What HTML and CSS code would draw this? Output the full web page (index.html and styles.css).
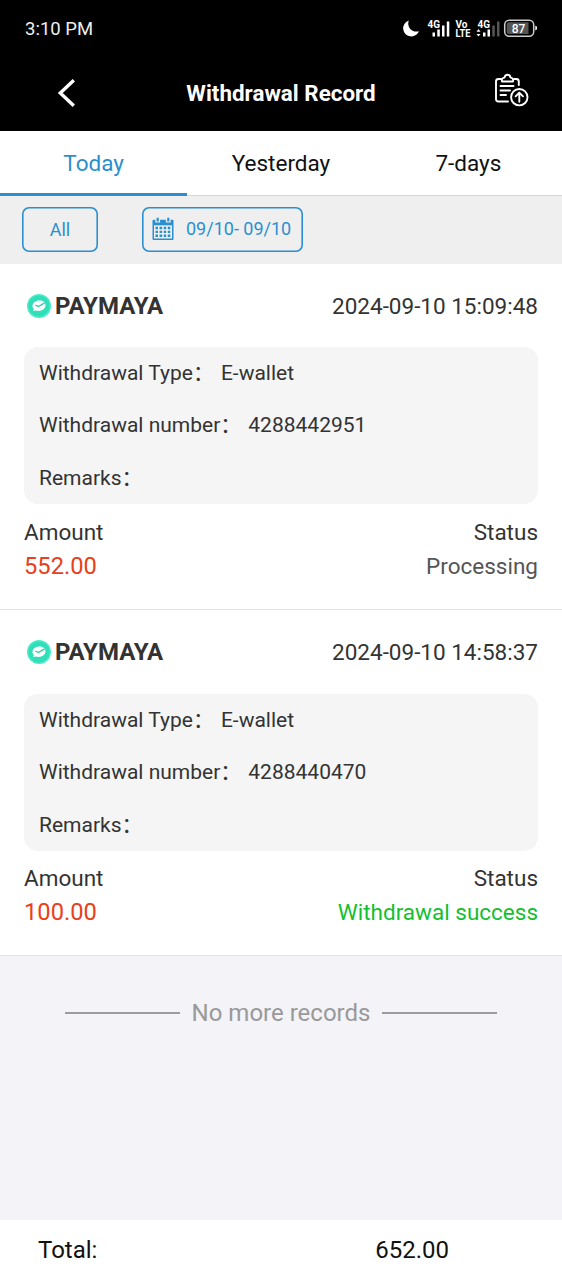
FILE: index.html
```html
<!DOCTYPE html>
<html lang="en">
<head>
<meta charset="utf-8">
<title>Withdrawal Record</title>
<link rel="stylesheet" href="styles.css">
</head>
<body>
<svg class="defs" width="0" height="0">
  <symbol id="maya" viewBox="0 0 26 26">
    <circle cx="13" cy="13" r="12" fill="#4becc5"/>
    <circle cx="13" cy="13" r="10.500" fill="#30dfba"/>
    <path d="M13.300 7.500c3.800 0 6.200 1.900 6.200 4.700 0 3.400-3.200 5.700-7 5.700-1 0-1.800-.2-2.500-.5l-3 .6.900-1.900c-1-.9-1.400-1.800-1.400-3 0-3.300 3.100-5.600 6.800-5.600z" fill="#fff"/>
    <path d="M9.800 12.200l2.600 1.400 5.800-3.500" fill="none" stroke="#2bc9a8" stroke-width="1.300" stroke-linecap="round"/>
  </symbol>
</svg>
<div class="screen">
  <div class="statusbar">
    <span class="clock">3:10 PM</span>
    <svg class="indicators" width="140" height="24" viewBox="0 0 140 24" fill="#fff">
      <path d="M8.800 3.500C6.500 9.500 11.500 16 19 14.300A8.200 8.200 0 1 1 8.800 3.500z"/>
      <text x="27.500" y="11" class="net">4G</text>
      <path d="M32.500 15.500h2.500v4h-2.500zM37.300 12.500h2.500v7h-2.500zM42 8.500h2.500v11h-2.500zM46.800 4.500h2.500v15h-2.500z"/>
      <text x="55.500" y="10.500" class="volte">Vo</text>
      <text x="55.500" y="20" class="volte" textLength="15" lengthAdjust="spacingAndGlyphs">LTE</text>
      <text x="77.500" y="11" class="net">4G</text>
      <path d="M76.500 14.700l2-2.600 2 2.600zM76.500 16.900l2 2.600 2-2.600zM83 15.500h2.500v4h-2.500zM87.500 12.500h2.500v7h-2.500z"/>
      <path d="M92.300 8.500h2.500v11h-2.500zM97 4.500h2.500v15h-2.500z" fill="#555"/>
      <rect x="104.700" y="3.200" width="29" height="16" rx="4.500" fill="none" stroke="#ccc" stroke-width="1.500"/>
      <path d="M109 5.300h19.500v11.800H109q-2.300 0-2.300-2.300V7.600q0-2.300 2.300-2.300z" fill="#555"/>
      <path d="M135.300 8.800q1.800 0 1.800 2.300t-1.800 2.300z"/>
      <text x="118.500" y="15.500" class="charge">87</text>
    </svg>
  </div>
  <header class="header">
    <svg class="back" width="22" height="34" viewBox="0 0 22 34"><path d="M18.800 4.300L5.300 17l13.500 12.700" fill="none" stroke="#fff" stroke-width="3.400"/></svg>
    <h1 class="title">Withdrawal Record</h1>
    <svg class="report" width="36" height="36" viewBox="0 0 36 36" fill="none" stroke="#fff" stroke-width="1.900" stroke-linecap="round" stroke-linejoin="round">
      <path d="M8 6H5.500Q3 6 3 8.500V26q0 2.500 2.500 2.500H15M21 6h2.300q2.500 0 2.500 2.500V12"/>
      <path d="M9 8.500q-.8-3.700 2.500-3.900Q12 1.800 14.500 1.800t3 2.800q3.300.2 2.500 3.900z"/>
      <path d="M7.500 13H20.500M7.500 17.500H17M7.500 22H13"/>
      <circle cx="26.300" cy="24.200" r="8.200"/>
      <path d="M26.300 28.800v-9M22.600 23.300l3.700-3.700 3.700 3.700"/>
    </svg>
  </header>
  <nav class="tabs">
    <div class="tab active">Today</div>
    <div class="tab">Yesterday</div>
    <div class="tab">7-days</div>
  </nav>
  <div class="filters">
    <div class="filter all">All</div>
    <div class="filter range">
      <svg width="22" height="24" viewBox="0 0 22 24">
        <path d="M1.500 2.800h1.800v2.800h4.800V2.800h5.800v2.800h4.800V2.800h1.800q1 0 1 1V22q0 1-1 1h-19q-1 0-1-1V3.800q0-1 1-1z" fill="#2b8fcf"/>
        <path d="M4.600.8h2.200v3.800H4.600zM15.200.8h2.200v3.800h-2.200z" fill="#2b8fcf"/>
        <path d="M2 8.300h18v13.200H2z" fill="#efefef"/>
        <path d="M3.500 11h15.500M3.500 14.900h15.500M3.500 18.800h15.500" stroke="#2b8fcf" stroke-width="2.400" stroke-dasharray="2.500 1.600"/>
      </svg>
      <span>09/10- 09/10</span>
    </div>
  </div>
  <main class="records">
    <section class="record">
      <div class="record-head">
        <svg width="26" height="26"><use href="#maya"/></svg>
        <span class="brand">PAYMAYA</span>
        <span class="date">2024-09-10 15:09:48</span>
      </div>
      <div class="details">
        <div class="row"><span class="label">Withdrawal Type：</span><span class="value">E-wallet</span></div>
        <div class="row"><span class="label">Withdrawal number：</span><span class="value">4288442951</span></div>
        <div class="row"><span class="label">Remarks：</span></div>
      </div>
      <div class="summary"><span>Amount</span><span>Status</span></div>
      <div class="summary result"><span class="amount">552.00</span><span class="processing">Processing</span></div>
    </section>
    <section class="record">
      <div class="record-head">
        <svg width="26" height="26"><use href="#maya"/></svg>
        <span class="brand">PAYMAYA</span>
        <span class="date">2024-09-10 14:58:37</span>
      </div>
      <div class="details">
        <div class="row"><span class="label">Withdrawal Type：</span><span class="value">E-wallet</span></div>
        <div class="row"><span class="label">Withdrawal number：</span><span class="value">4288440470</span></div>
        <div class="row"><span class="label">Remarks：</span></div>
      </div>
      <div class="summary"><span>Amount</span><span>Status</span></div>
      <div class="summary result"><span class="amount">100.00</span><span class="success">Withdrawal success</span></div>
    </section>
  </main>
  <div class="end"><span class="rule"></span><span class="end-text">No more records</span><span class="rule"></span></div>
  <footer class="total"><span>Total:</span><span class="sum">652.00</span></footer>
</div>
</body>
</html>
```
FILE: styles.css
```css
* { box-sizing: border-box; }
body { margin: 0; font-family: Roboto, "Noto Sans CJK SC", sans-serif; color: #333; }
.defs { display: none; }
.screen { width: 562px; height: 1280px; display: flex; flex-direction: column; background: #f3f3f8; overflow: hidden; }
.statusbar { height: 56px; background: #000; color: #eee; display: flex; justify-content: space-between; align-items: center; padding: 1px 22px 0 25px; }
.clock { font-size: 18.500px; }
.indicators { flex: none; }
.net { font-size: 10px; font-weight: 700; }
.volte { font-size: 10px; font-weight: 700; }
.charge { font-size: 12px; font-weight: 500; text-anchor: middle; }
.header { height: 75px; background: #000; color: #fff; display: flex; align-items: center; justify-content: space-between; padding: 0 33px 1px 55px; }
.title { margin: 0 8px 0 0; font-size: 22.400px; font-weight: 700; line-height: 28px; }
.report { margin-bottom: 4px; }
.tabs { height: 65px; background: #fff; display: flex; border-bottom: 1px solid #d5d9dd; color: #111; font-size: 22.500px; }
.tab { flex: 1; height: 65px; line-height: 64px; text-align: center; }
.active { color: #2b8fcf; border-bottom: 3px solid #2b8fcf; }
.filters { height: 68px; background: #efefef; display: flex; gap: 45px; padding: 10.500px 22px; }
.filter { height: 45px; box-shadow: inset 0 0 0 1.600px #2b8fcf; border-radius: 7px; color: #2b8fcf; display: flex; align-items: center; font-size: 18px; }
.all { width: 76px; justify-content: center; }
.range { width: 161px; margin-left: -1px; gap: 12px; padding-left: 10px; padding-bottom: 1px; }
.record { height: 346px; background: #fff; border-bottom: 1px solid #e3e3e3; padding: 28px 24px 0; }
.record + .record { padding-top: 28px; }
.record-head { height: 28px; display: flex; align-items: center; padding-left: 2px; }
.brand { font-size: 24px; font-weight: 700; margin-left: 3px; }
.date { margin-left: auto; font-size: 22.500px; }
.details { margin-top: 27px; height: 157px; border-radius: 14px; background: #f5f5f5; padding: 0 15px; }
.record + .record .details { margin-top: 28px; }
.row { height: 52.400px; line-height: 52px; display: flex; font-size: 21px; }
.value { margin-left: 7px; }
.summary { margin-top: 11px; height: 33.500px; line-height: 34px; display: flex; justify-content: space-between; font-size: 22.500px; }
.record + .record .details + .summary { margin-top: 10px; }
.result { margin-top: 0; }
.amount { color: #e8401c; font-size: 23.700px; }
.processing { color: #555; }
.success { color: #13bf2f; }
.end { height: 113px; display: flex; align-items: center; justify-content: center; gap: 12px; color: #999; font-size: 24px; }
.rule { width: 115px; border-top: 2px solid #9c9c9f; }
.total { margin-top: auto; height: 60px; background: #fff; display: flex; align-items: center; padding-left: 38px; padding-bottom: 1px; font-size: 24px; color: #111; }
.sum { margin-left: auto; margin-right: 113px; }
```
